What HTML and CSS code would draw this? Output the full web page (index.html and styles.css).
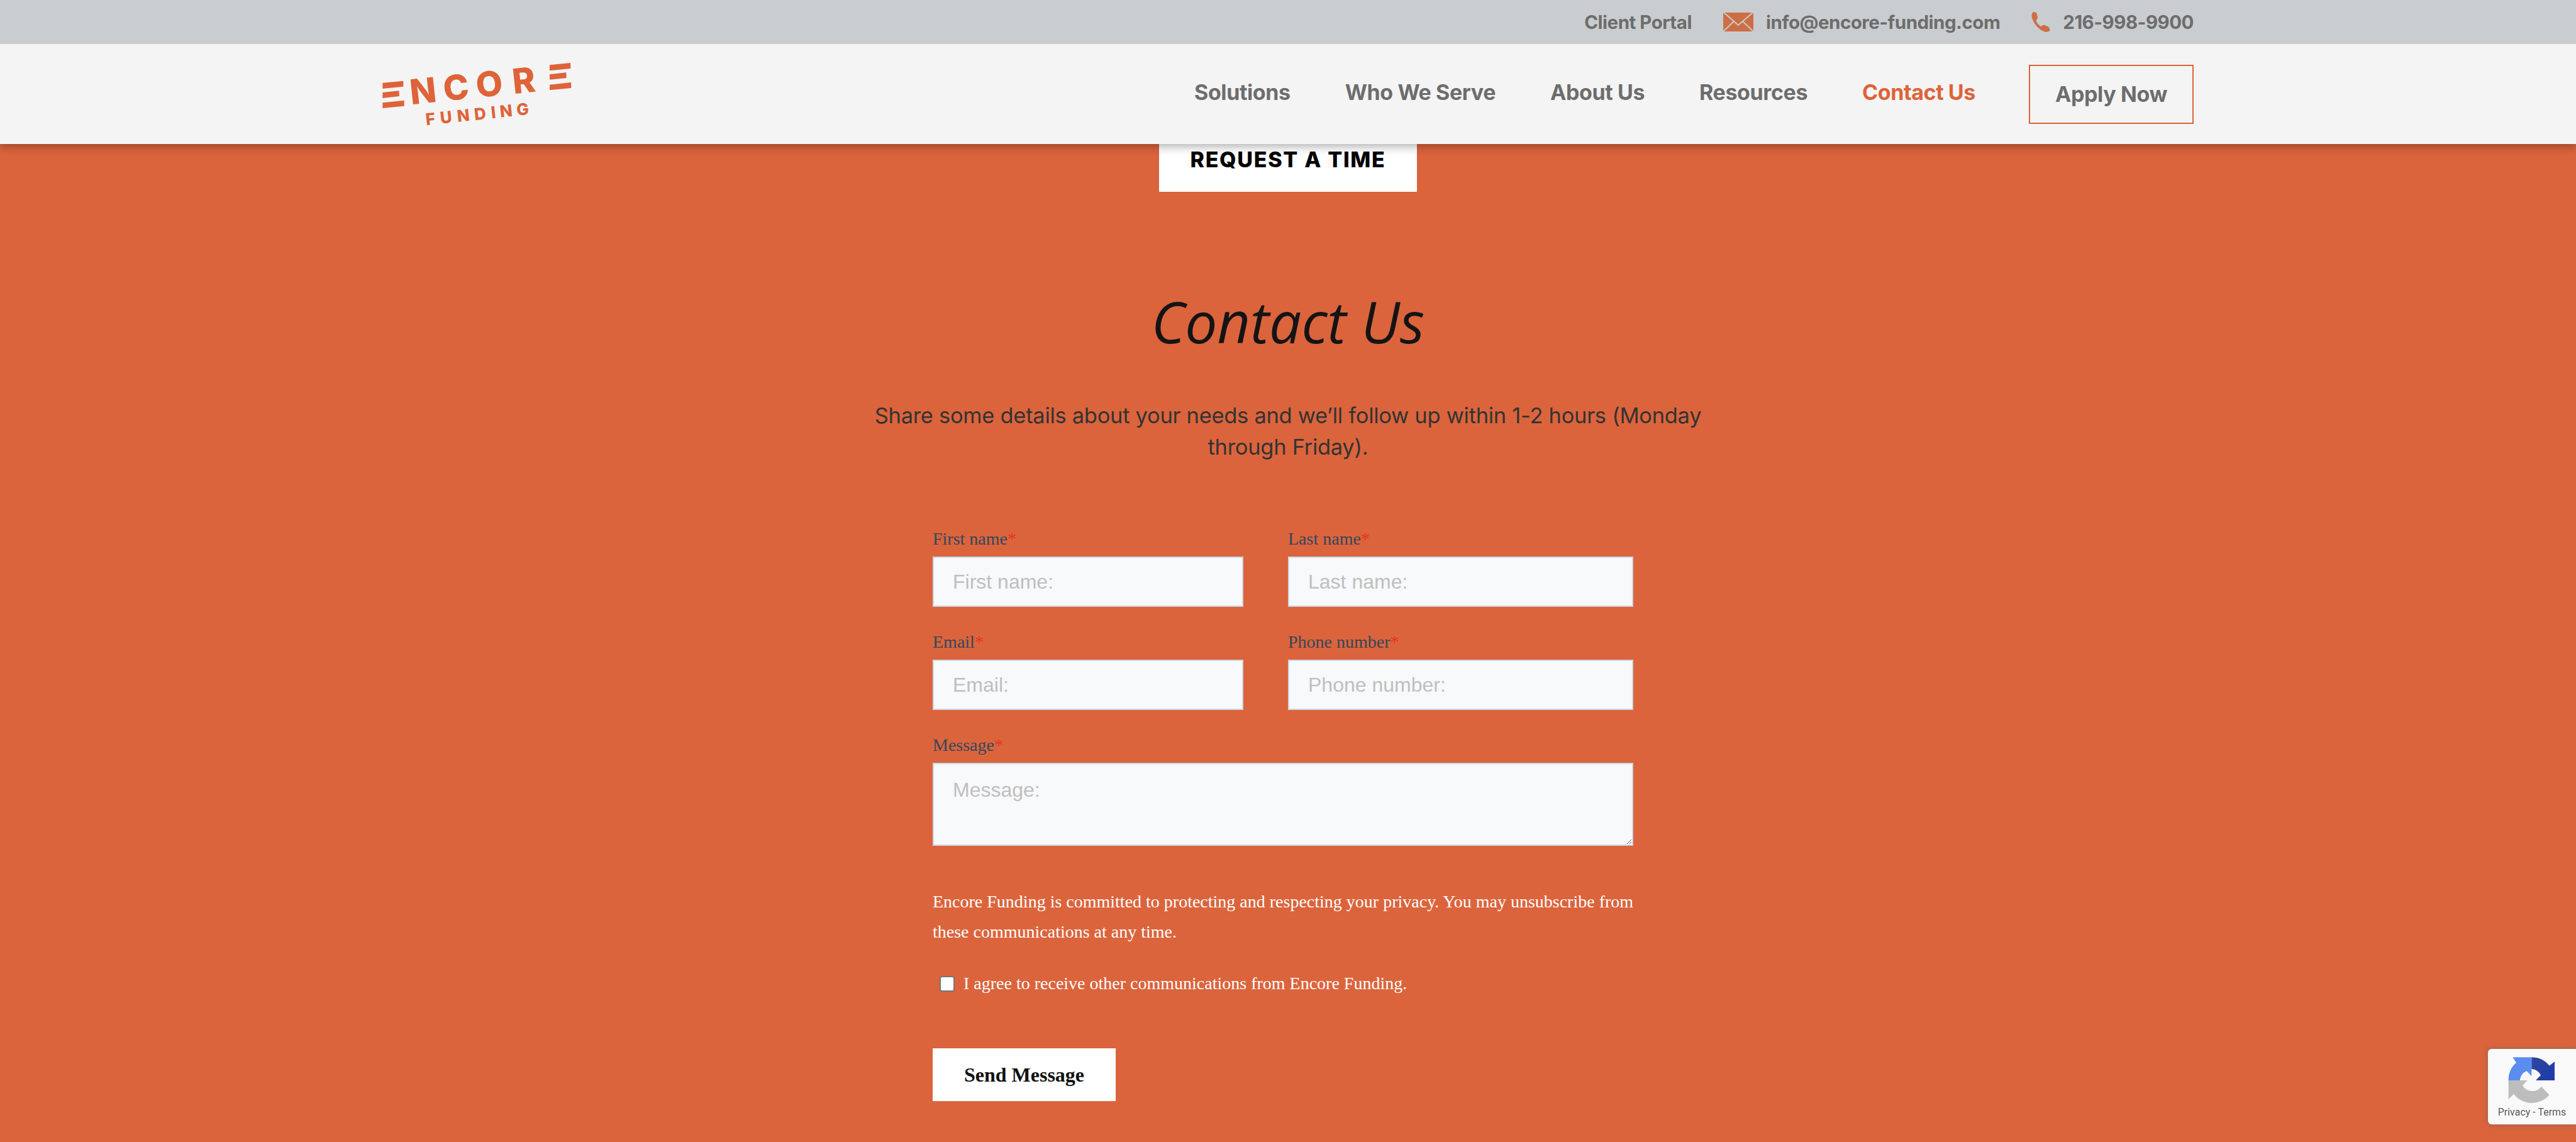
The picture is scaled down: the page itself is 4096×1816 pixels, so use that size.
FILE: index.html
```html
<!DOCTYPE html>
<html lang="en">
<head>
<meta charset="utf-8">
<title>Contact Us - Encore Funding</title>
<link rel="stylesheet" href="styles.css">
</head>
<body>
<header class="header">
  <div class="topbar">
    <div class="wrap topbar-inner">
      <a class="top-link">Client Portal</a>
      <a class="top-link with-icon">
        <svg class="icon-mail" viewBox="0 0 48 30"><rect width="48" height="30" fill="#cd6e45"/><path d="M1 0 L24 20 L47 0 M0 30 L17 14 M48 30 L31 14" fill="none" stroke="#c9cdd0" stroke-width="2"/></svg>
        <span>info@encore-funding.com</span>
      </a>
      <a class="top-link with-icon">
        <svg class="icon-phone" viewBox="0 0 30 32"><path d="M3 0 C7 0 9 2 9 5 L10 9 C10 12 7 12 8 15 C10 19 12 21 15 23 C17 23 18 20 21 21 L26 23 C29 25 30 27 29 30 C27 32 23 32 20 31 C12 28 5 20 2 12 C0 7 0 3 3 0 Z" fill="#cd6e45"/></svg>
        <span>216-998-9900</span>
      </a>
    </div>
  </div>
  <div class="navbar">
    <div class="wrap navbar-inner">
      <svg class="logo" viewBox="144 270 910 360" role="img" aria-label="Encore Funding">
        <g fill="#de6339">
          <polygon points="144,395 243,386 243,413 144,423"/>
          <polygon points="144,441 222,433 224,459 144,468"/>
          <polygon points="144,490 247,479 247,506 144,516"/>
          <polygon points="941,310 1040,300 1041,327 941,337"/>
          <polygon points="941,355 1020,346 1021,372 941,380"/>
          <polygon points="941,404 1043,393 1044,420 941,430"/>
          <text class="logo-main" transform="translate(280 499) rotate(-6)" x="0 160 317 492">NCOR</text>
          <text class="logo-sub" transform="translate(350 598) rotate(-6)" x="2 72 153 235 316 358 438">FUNDING</text>
        </g>
      </svg>
      <nav class="nav">
        <a class="nav-link">Solutions</a>
        <a class="nav-link">Who We Serve</a>
        <a class="nav-link">About Us</a>
        <a class="nav-link">Resources</a>
        <a class="nav-link active">Contact Us</a>
        <a class="apply">Apply Now</a>
      </nav>
    </div>
  </div>
</header>

<main class="main">
  <a class="request">REQUEST A TIME</a>
  <h1 class="title">Contact Us</h1>
  <p class="lead">Share some details about your needs and we’ll follow up within 1-2 hours (Monday through Friday).</p>

  <form class="form">
    <div class="fields">
      <div class="field">
        <label class="label">First name<span class="req">*</span></label>
        <input class="input" type="text" placeholder="First name:">
      </div>
      <div class="field">
        <label class="label">Last name<span class="req">*</span></label>
        <input class="input" type="text" placeholder="Last name:">
      </div>
      <div class="field">
        <label class="label">Email<span class="req">*</span></label>
        <input class="input" type="text" placeholder="Email:">
      </div>
      <div class="field">
        <label class="label">Phone number<span class="req">*</span></label>
        <input class="input" type="text" placeholder="Phone number:">
      </div>
      <div class="field field-wide">
        <label class="label">Message<span class="req">*</span></label>
        <textarea class="input textarea" placeholder="Message:"></textarea>
      </div>
    </div>
    <p class="privacy">Encore Funding is committed to protecting and respecting your privacy. You may unsubscribe from these communications at any time.</p>
    <label class="consent"><input class="check" type="checkbox"><span>I agree to receive other communications from Encore Funding.</span></label>
    <button class="send" type="button">Send Message</button>
  </form>
</main>

<aside class="recaptcha">
  <svg class="recaptcha-icon" viewBox="200 115 240 240">
    <defs>
      <linearGradient id="dark" x1="0" y1="0" x2="1" y2="1"><stop offset="0" stop-color="#2f47a0"/><stop offset="1" stop-color="#1c3aa9"/></linearGradient>
    </defs>
    <path d="M208 235 A110 110 0 0 1 245 150 L228 125 L318 125 L318 215 L295 190 A55 55 0 0 0 262 235 Z" fill="#5b8def"/>
    <path d="M318 125 A110 110 0 0 1 403 165 L428 145 L428 235 L338 235 L362 210 A55 55 0 0 0 318 180 Z" fill="url(#dark)"/>
    <path d="M208 235 L298 235 L275 260 A55 55 0 0 0 365 265 L403 305 A110 110 0 0 1 233 300 L208 325 Z" fill="#bdbdbd"/>
  </svg>
  <div class="recaptcha-text">Privacy - Terms</div>
</aside>
</body>
</html>
```

FILE: styles.css
```css
* { box-sizing: border-box; }
html, body { margin: 0; height: 1816px; overflow: hidden; }
body { background: #db643c; font-family: "Liberation Serif", serif; }

.wrap { width: 2880px; margin: 0 auto; }

.header { position: relative; z-index: 5; box-shadow: 0 4px 14px rgba(0,0,0,.32); }
.topbar { height: 70px; background: #c9cdd0; }
.topbar-inner { height: 100%; display: flex; justify-content: flex-end; align-items: center; gap: 50px; }
.top-link { font-family: Inter, sans-serif; font-weight: 700; font-size: 29.5px; letter-spacing: -0.5px; color: #6d6d6d; }
.with-icon { display: flex; align-items: center; gap: 20px; }
.icon-mail { width: 48px; height: 30px; }
.icon-phone { width: 30px; height: 32px; }

.navbar { height: 159px; background: #f4f4f4; }
.navbar-inner { height: 100%; display: flex; justify-content: space-between; align-items: center; }
.logo { width: 304px; height: 120px; }
.logo-main { font-family: Inter, sans-serif; font-weight: 800; font-size: 165px; }
.logo-sub { font-family: Inter, sans-serif; font-weight: 800; font-size: 78px; }

.nav { display: flex; align-items: center; gap: 87px; }
.nav-link { font-family: Inter, sans-serif; font-weight: 700; font-size: 34px; letter-spacing: -0.4px; color: #6d6d6d; padding-bottom: 6px; }
.nav-link.active { color: #de6339; }
.apply { width: 262px; height: 94px; display: flex; align-items: center; justify-content: center; border: 2px solid #de6339; font-family: Inter, sans-serif; font-weight: 700; font-size: 34px; letter-spacing: -0.4px; color: #6d6d6d; margin-left: -2px; }

.main { display: flex; flex-direction: column; align-items: center; }
.request { width: 410px; height: 76px; padding-top: 5px; background: #fff; color: #000; text-align: center; font-family: Inter, sans-serif; font-weight: 800; font-size: 34px; letter-spacing: 1.7px; line-height: 40px; }
.title { margin: 156px 0 0; font-family: "Open Sans", sans-serif; font-style: italic; font-weight: 500; font-size: 91px; line-height: 100px; color: #141414; }
.lead { width: 1340px; margin: 75px 0 0; text-align: center; font-family: Inter, sans-serif; font-size: 34.5px; letter-spacing: -0.3px; line-height: 50px; color: #333; }

.form { width: 1130px; margin-top: 105px; }
.fields { display: grid; grid-template-columns: 494px 549px; column-gap: 71px; row-gap: 40px; }
.field { display: flex; flex-direction: column; }
.field-wide { grid-column: 1 / -1; width: 1114px; }
.label { font-size: 28px; line-height: 32px; margin-bottom: 12px; color: #33475b; }
.req { color: #e8312a; }
.input { display: block; width: 100%; height: 80px; padding: 0 30px; border: 2px solid #cbd6e2; border-radius: 0; background: #f7f9fb; font-family: "Liberation Sans", sans-serif; font-size: 32px; outline: none; }
.input::placeholder { color: #bfbfbf; opacity: 1; }
.textarea { height: 132px; padding: 23px 30px; }

.privacy { width: 1130px; margin: 65px 0 0; font-size: 28px; line-height: 48px; color: #fff; }
.consent { display: flex; align-items: center; gap: 14px; margin: 40px 0 0 11px; font-size: 28px; line-height: 36px; color: #fff; }
.check { appearance: none; width: 24px; height: 25px; margin: 0; background: #fff; border: 2px solid #767676; border-radius: 4px; }
.send { display: block; width: 291px; height: 84px; margin-top: 85px; padding: 0; border: 0; background: #fff; color: #111; font-family: "Liberation Serif", serif; font-weight: 700; font-size: 32px; }

.recaptcha { position: fixed; right: 0; bottom: 28px; width: 140px; height: 120px; padding-top: 10px; background: #f9f9f9; border-radius: 6px 0 0 6px; box-shadow: 0 0 10px rgba(100,100,100,.6); display: flex; flex-direction: column; align-items: center; }
.recaptcha-icon { width: 80px; height: 80px; }
.recaptcha-text { margin-top: 1px; font-family: Roboto, sans-serif; font-size: 16px; line-height: 20px; color: #555; white-space: nowrap; }
```
